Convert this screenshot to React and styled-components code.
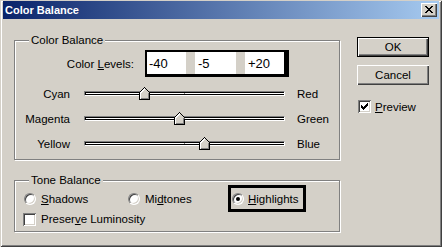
import React from 'react';
import styled, { createGlobalStyle } from 'styled-components';

const Global = createGlobalStyle`
  * { box-sizing: border-box; }
  html, body { margin: 0; padding: 0; background: #d4d0c8; }
  body {
    width: 442px; height: 247px; overflow: hidden;
    font-family: "Liberation Sans", Arial, sans-serif;
    font-size: 11.5px; color: #000;
  }
  u { text-decoration: underline; text-underline-offset: 1px; }
`;

const Window = styled.div`
  width: 442px;
  height: 247px;
  background: #d4d0c8;
  padding: 1px 3px 3px 3px;
  box-shadow: inset 1px 1px #d4d0c8, inset -1px -1px #404040,
    inset 2px 2px #fff, inset -2px -2px #808080;
  display: flex;
  flex-direction: column;
`;

const TitleBar = styled.div`
  height: 18px;
  flex: none;
  display: flex;
  align-items: center;
  justify-content: space-between;
  padding: 0 2px 0 2px;
  background: linear-gradient(to right, #0a246a, #a6caf0);
`;

const Title = styled.div`
  color: #fff;
  font-weight: bold;
  font-size: 11px;
  line-height: 18px;
`;

const CaptionButton = styled.div`
  width: 16px;
  height: 14px;
  background: #d4d0c8;
  box-shadow: inset 1px 1px #fff, inset -1px -1px #404040, inset -2px -2px #808080;
  display: flex;
  align-items: center;
  justify-content: center;
  padding-bottom: 1px;
`;

const Body = styled.div`
  flex: 1;
  display: flex;
  padding-left: 11px;
`;

const LeftColumn = styled.div`
  display: flex;
  flex-direction: column;
`;

const Group = styled.div`
  display: flex;
  flex-direction: column;
  width: 326px;
  height: ${(p) => p.$h}px;
  margin-top: ${(p) => p.$top}px;
  border: 1px solid #808080;
  box-shadow: inset 1px 1px #fff, 1px 1px #fff;
`;

const Legend = styled.div`
  align-self: flex-start;
  margin: -7px 0 0 14px;
  padding: 0 2px;
  height: 13px;
  line-height: 13px;
  background: #d4d0c8;
`;

const LevelsRow = styled.div`
  display: flex;
  align-items: center;
  margin-top: 3px;
  height: 27px;
`;

const LevelsLabel = styled.div`
  width: 119px;
  margin-right: 11px;
  text-align: right;
`;

const LevelsBox = styled.div`
  display: grid;
  grid-template-columns: 39px 10px 40px 10px 38px;
  width: 144px;
  height: 27px;
  border-style: solid;
  border-color: #000;
  border-width: 2px 5px 4px 2px;
`;

const Field = styled.div`
  background: #fff;
  font-size: 13px;
  line-height: 21px;
  padding: 1px 0 0 2px;
`;

const FieldGap = styled.div`
  background: #d4d0c8;
  box-shadow: inset -1px 0 #fff;
`;

const SliderList = styled.div`
  display: flex;
  flex-direction: column;
  margin-top: 4px;
`;

const SliderRow = styled.div`
  display: flex;
  align-items: center;
  height: 25px;
`;

const SideLabel = styled.div`
  width: 55px;
  text-align: right;
`;

const RightLabel = styled.div`
  margin-left: 12px;
`;

const Track = styled.div`
  position: relative;
  margin-left: 14px;
  width: 201px;
  height: 5px;
  background: #fff;
  border-top: 1px solid #808080;
  border-left: 1px solid #808080;
  border-bottom: 1px solid #fff;
  border-right: 1px solid #fff;
  box-shadow: inset 0 1px #000, inset 0 -1px #000, inset 1px 0 #000;
  &::after {
    content: '';
    position: absolute;
    left: 99px;
    top: 1px;
    width: 1px;
    height: 1px;
    background: #808080;
  }
`;

const Thumb = styled.svg`
  position: absolute;
  top: -5px;
  width: 11px;
  height: 13px;
  display: block;
`;

const Tone = styled.div`
  display: flex;
  align-items: center;
  margin-top: -2px;
  height: 27px;
  padding-left: 9px;
`;

const ToneOption = styled.div`
  width: 104px;
  display: flex;
  align-items: center;
  gap: 5px;
`;

const Focus = styled.div`
  display: flex;
  align-items: center;
  gap: 4px;
  width: 78px;
  height: 27px;
  margin-left: -4px;
  padding-left: 1px;
  border: 3px solid #000;
`;

const Radio = styled.div`
  position: relative;
  width: 12px;
  height: 12px;
  flex: none;
  border-radius: 50%;
  background: #fff;
  border: 1px solid;
  border-color: #808080 #fff #fff #808080;
  box-shadow: inset 1px 1px #404040, inset -1px -1px #d4d0c8;
  &::after {
    content: '';
    display: ${(p) => (p.$on ? 'block' : 'none')};
    position: absolute;
    left: 3px;
    top: 3px;
    width: 4px;
    height: 4px;
    border-radius: 50%;
    background: #000;
  }
`;

const CheckRow = styled.div`
  display: flex;
  align-items: center;
  height: ${(p) => p.$h}px;
  padding-left: ${(p) => p.$pl}px;
  margin-top: ${(p) => p.$mt || 0}px;
  gap: ${(p) => p.$gap}px;
`;

const CheckBox = styled.div`
  width: 13px;
  height: 13px;
  flex: none;
  background: #fff;
  box-shadow: inset 1px 1px #808080, inset -1px -1px #fff,
    inset 2px 2px #404040, inset -2px -2px #d4d0c8;
  display: flex;
  align-items: center;
  justify-content: center;
`;

const RightColumn = styled.div`
  display: flex;
  flex-direction: column;
  margin-left: 17px;
  padding-top: 18px;
`;

const Button = styled.div`
  width: 72px;
  height: 20px;
  margin-bottom: ${(p) => p.$mb || 0}px;
  display: flex;
  align-items: center;
  justify-content: center;
  background: #d4d0c8;
  border: ${(p) => (p.$default ? '1px solid #000' : 'none')};
  box-shadow: inset 1px 1px #fff, inset -1px -1px #404040, inset -2px -2px #808080;
`;

const XGlyph = () => (
  <svg width="8" height="7" viewBox="0 0 8 7" shapeRendering="crispEdges">
    <path
      fill="#000"
      d="M0 0h2v1H0zM6 0h2v1H6zM1 1h2v1H1zM5 1h2v1H5zM2 2h4v1H2zM3 3h2v1H3zM2 4h4v1H2zM1 5h2v1H1zM5 5h2v1H5zM0 6h2v1H0zM6 6h2v1H6z"
    />
  </svg>
);

const CheckGlyph = () => (
  <svg width="7" height="7" viewBox="0 0 7 7" shapeRendering="crispEdges">
    <path
      fill="#000"
      d="M6 0h1v1H6zM5 1h2v1H5zM0 2h1v1H0zM4 2h3v1H4zM0 3h2v1H0zM3 3h3v1H3zM0 4h5v1H0zM1 5h3v1H1zM2 6h1v1H2z"
    />
  </svg>
);

const SliderThumb = ({ value }) => (
  <Thumb style={{ left: 100 + value - 6 }} viewBox="0 0 11 13" shapeRendering="crispEdges">
    <polygon points="0.5,5.5 5.5,0.5 10.5,5.5 10.5,12.5 0.5,12.5" fill="#d4d0c8" stroke="#000" />
    <polyline points="1.5,11.5 1.5,5.9 5.5,1.9 6,2.4" fill="none" stroke="#fff" />
    <polyline points="1.5,11.5 9.5,11.5 9.5,6" fill="none" stroke="#808080" />
  </Thumb>
);

const sliders = [
  { left: 'Cyan', right: 'Red', value: -40 },
  { left: 'Magenta', right: 'Green', value: -5 },
  { left: 'Yellow', right: 'Blue', value: 20 },
];

export default function App() {
  return (
    <>
      <Global />
      <Window>
        <TitleBar>
          <Title>Color Balance</Title>
          <CaptionButton>
            <XGlyph />
          </CaptionButton>
        </TitleBar>
        <Body>
          <LeftColumn>
            <Group $h={120} $top={21}>
              <Legend>Color Balance</Legend>
              <LevelsRow>
                <LevelsLabel>
                  Color <u>L</u>evels:
                </LevelsLabel>
                <LevelsBox>
                  <Field>-40</Field>
                  <FieldGap />
                  <Field>-5</Field>
                  <FieldGap />
                  <Field>+20</Field>
                </LevelsBox>
              </LevelsRow>
              <SliderList>
                {sliders.map((s) => (
                  <SliderRow key={s.left}>
                    <SideLabel>{s.left}</SideLabel>
                    <Track>
                      <SliderThumb value={s.value} />
                    </Track>
                    <RightLabel>{s.right}</RightLabel>
                  </SliderRow>
                ))}
              </SliderList>
            </Group>
            <Group $h={52} $top={20}>
              <Legend>Tone Balance</Legend>
              <Tone>
                <ToneOption>
                  <Radio />
                  <span>
                    <u>S</u>hadows
                  </span>
                </ToneOption>
                <ToneOption>
                  <Radio />
                  <span>
                    Mi<u>d</u>tones
                  </span>
                </ToneOption>
                <Focus>
                  <Radio $on />
                  <span>
                    <u>H</u>ighlights
                  </span>
                </Focus>
              </Tone>
              <CheckRow $h={14} $pl={8} $gap={5}>
                <CheckBox />
                <span>
                  Preser<u>v</u>e Luminosity
                </span>
              </CheckRow>
            </Group>
          </LeftColumn>
          <RightColumn>
            <Button $default $mb={8}>OK</Button>
            <Button>Cancel</Button>
            <CheckRow $h={13} $pl={1} $gap={4} $mt={15}>
              <CheckBox>
                <CheckGlyph />
              </CheckBox>
              <span>
                <u>P</u>review
              </span>
            </CheckRow>
          </RightColumn>
        </Body>
      </Window>
    </>
  );
}
